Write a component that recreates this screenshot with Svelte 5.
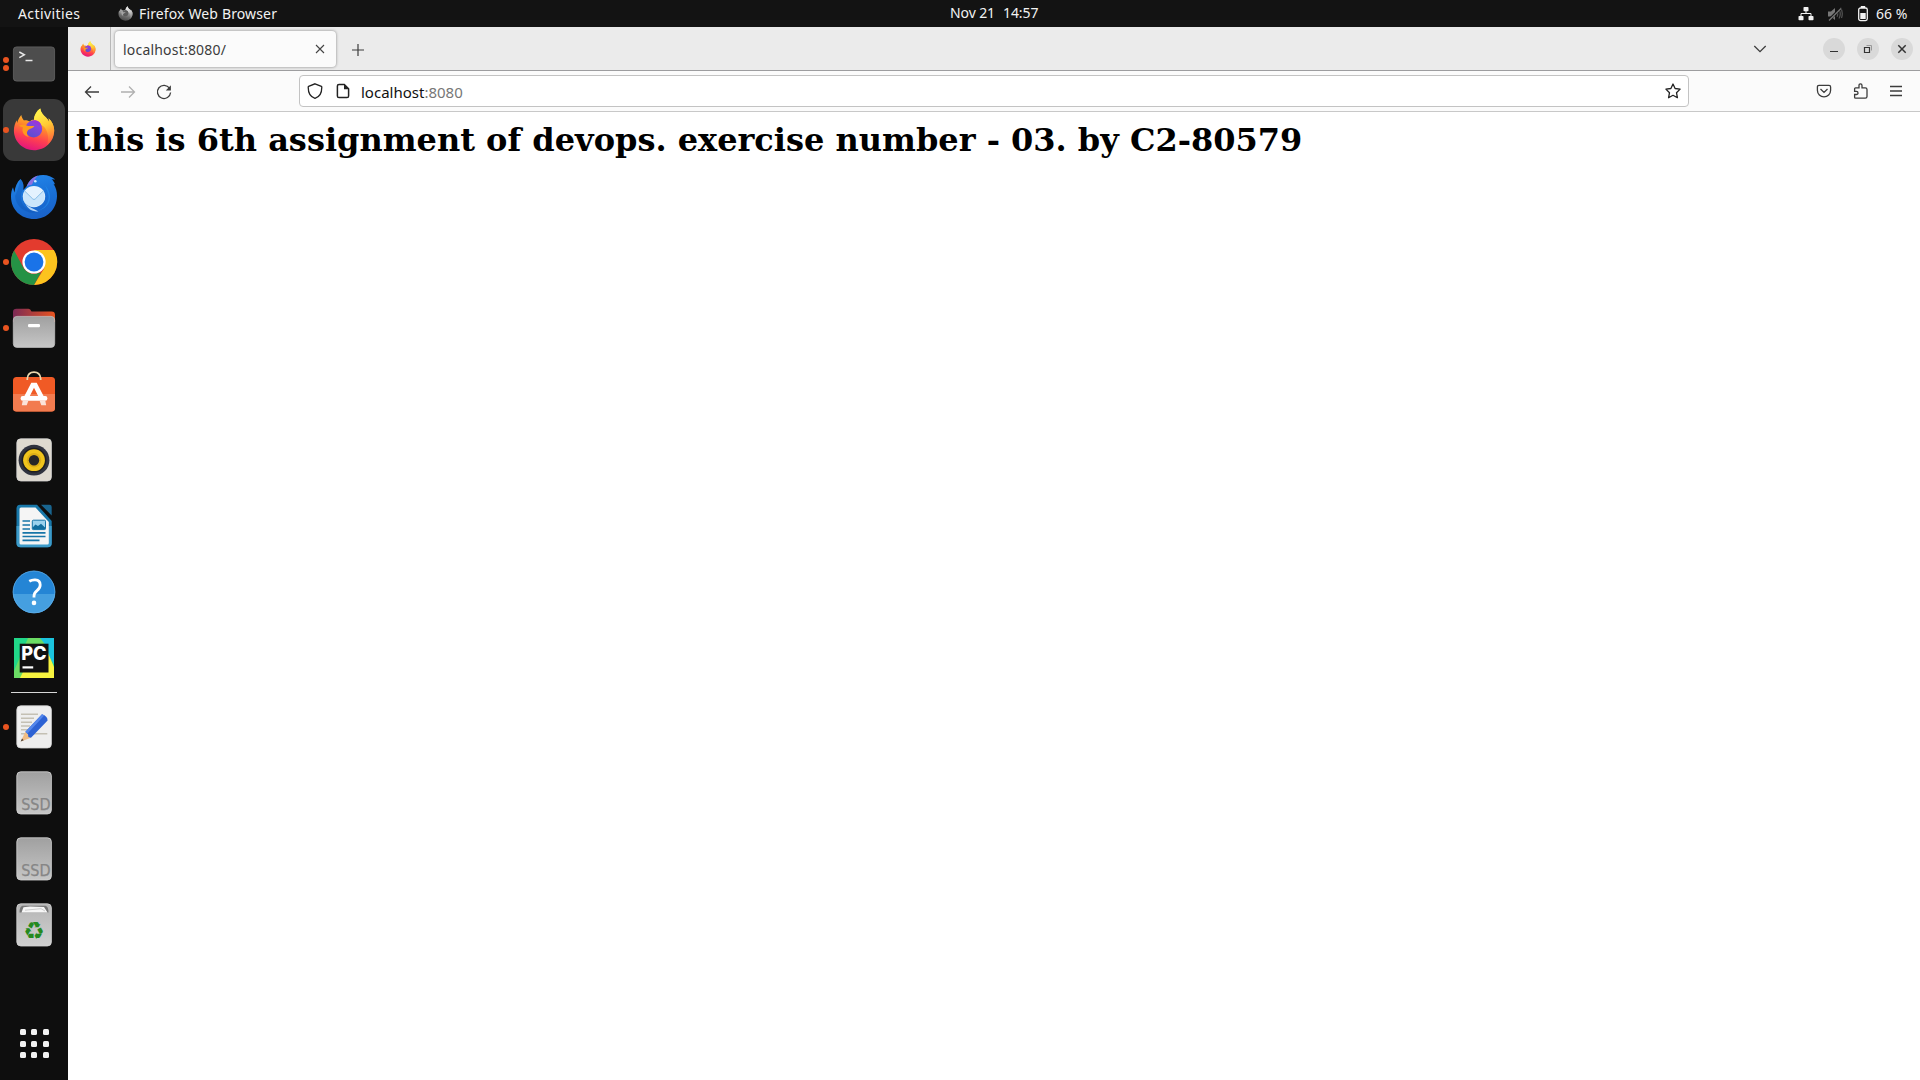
<script>
  const apps = [
    { name: 'terminal', dots: 2 },
    { name: 'firefox', dots: 1, active: true },
    { name: 'mail', dots: 0 },
    { name: 'chrome', dots: 1 },
    { name: 'files', dots: 1 },
    { name: 'software', dots: 0 },
    { name: 'music', dots: 0 },
    { name: 'writer', dots: 0 },
    { name: 'help', dots: 0 },
    { name: 'pycharm', dots: 0 }
  ];
  const extras = [
    { name: 'editor', dots: 1 },
    { name: 'ssd', dots: 0 },
    { name: 'ssd', dots: 0 },
    { name: 'trash', dots: 0 }
  ];
</script>

{#snippet firefoxArt()}
  <path fill="url(#fx-body)" d="M11.3 9 C11.8 11.5 12.5 13 14 14.4 C16 14.2 18 14.6 19.5 15.6 C21 14 22.4 13.7 24 13.7 C24 9.5 26.8 4.6 30.3 2.4 C30.5 6 33 8.5 36 11.5 C37.5 13 38.6 14.5 39.2 16.2 C39.3 14.8 39 13.5 38.5 12.3 C42 15.5 44.2 20 44.2 24.2 C44.2 35.5 35.2 44.2 24 44.2 C12.8 44.2 3.9 35.4 3.9 24.5 C3.9 20.2 5.2 16.8 6.8 14.2 L7.1 17 C8 13.8 9.4 11.3 11.3 9 Z" />
  <path fill="url(#fx-flame)" d="M30.3 2.4 C30.5 6 33 8.5 36 11.5 C37.5 13 38.6 14.5 39.2 16.2 C39.3 14.8 39 13.5 38.5 12.3 C42 15.5 44.2 20 44.2 24.2 C44.1 31 41 36 37 39 C40 32 37 21 31.5 19.3 C29 15.5 26.5 14.2 24 13.7 C24 9.5 26.8 4.6 30.3 2.4 Z" />
  <circle cx="23.7" cy="23.1" r="8.5" fill="url(#fx-core)" />
  <path fill="#9837d8" d="M21 15.2 C25 12.6 30.5 15 31.5 19.5 L29.5 18.2 L30 20.5 L26.5 18.5 Z" />
  <path fill="#ff9a1c" d="M9 19.5 C12 18.2 15 18.8 18 20 L24.3 20 C23.5 22.3 20.5 22.3 18.2 24 C16.2 26 16.5 29 19 31.2 C14 30 11.2 25.5 13 21.5 C11.6 20.9 10.2 20.5 9 19.5 Z" />
{/snippet}

{#snippet plate(fill)}
  <rect x="6.8" y="2.8" width="34.6" height="42.2" rx="4" {fill} stroke="#d4d4d4" stroke-width=".8" />
{/snippet}

{#snippet appIcon(name)}
  <svg class="app-icon" viewBox="0 0 48 48">
    {#if name === 'terminal'}
      <rect x="3.4" y="6.9" width="41.2" height="34.2" rx="3.2" fill="#4d4d4d" stroke="#646464" stroke-width=".8" />
      <path d="M9.3 12 L14.3 14.8 L9.3 17.6" fill="none" stroke="#e8e8e8" stroke-width="1.5" />
      <path d="M15.5 20.5 H22.5" stroke="#e8e8e8" stroke-width="1.5" />
    {:else if name === 'firefox'}
      {@render firefoxArt()}
    {:else if name === 'mail'}
      <path fill="url(#tb-body)" d="M10.5 7 C13.5 10 14 14 13.2 18 L16.5 14.5 C19 8 24 3.1 33 3 C38 3 42 5 45.3 7.4 L41.5 7.3 C43.3 8.7 44.5 10.5 45 12.5 L43.5 11.7 C46 15.5 47.1 19.5 47 24 C46.8 37.5 36.8 47 24.2 47 C10.8 47 1 37.5 1 24.5 C1 21.5 1.5 18 3 15.3 L4.4 20.5 C5.2 14.5 7 10 10.5 7 Z" />
      <path fill="#0b4fae" opacity=".35" d="M13 18 C8 25 11 39 28 40 C18 43 6 36 5 24 C7 20 9 14 10.5 7 C14 11 13.8 14 13 18 Z" />
      <path fill="#2590f0" opacity=".55" d="M35 13 C43 22 42 35 28 39 C37 35 40 28 38 21 Z" />
      <ellipse cx="24" cy="24.6" rx="11.2" ry="10.6" fill="#e4f2fe" />
      <path fill="#c3e1fa" d="M14.2 19 L23 27.5 Q24 28.3 25 27.5 L33.8 19 L34.8 27 C32.5 33 26 35.8 20 34.6 C16 33.5 13.5 30 13 26 Z" opacity=".8" />
      <path d="M14.3 18.7 L22.8 27 Q24 28 25.2 27 L33.6 18.7" fill="none" stroke="#86bde6" stroke-width="1" />
      <path fill="#b5d6f7" d="M17 33.2 C20 35.2 24 37 28.5 39.5 C22 39.5 18 37 15.5 32 Z" />
      <path fill="#8b6fe0" d="M16.5 14.8 C19 9 23 5 28 3.5 C25 6.5 23 10 22 12.8 C19.5 12.6 18 13.5 16.5 14.8 Z" />
      <circle cx="25.3" cy="9.2" r="1.3" fill="#cfe5ff" />
    {:else if name === 'chrome'}
      <circle cx="24" cy="24" r="23" fill="#e33b2e" />
      <path fill="#fcc31e" d="M24 12 H43.9 A23 23 0 0 1 24 47 L34.4 30 Z" />
      <path fill="#259245" d="M4.1 12.5 L13.6 30 Q17 35.5 24 36 L31 34.5 L24 47 A23 23 0 0 1 4.1 12.5 Z" />
      <circle cx="24" cy="24" r="11.6" fill="#fff" />
      <circle cx="24" cy="24" r="9.4" fill="#1a73e8" />
    {:else if name === 'files'}
      <path fill="url(#folder)" d="M3 18 V8 Q3 4.7 6.5 4.7 H18.5 Q20.5 4.7 21.5 7.6 H41.5 Q45 7.6 45 11 V18 Z" />
      <rect x="3.3" y="12.4" width="41.4" height="31" rx="3.6" fill="url(#steel)" stroke="#c5c5c5" stroke-width=".7" />
      <rect x="18" y="20" width="12" height="3.3" rx="1.2" fill="#fff" />
    {:else if name === 'software'}
      <rect x="3" y="7" width="42" height="34.6" rx="3.5" fill="#f05a25" />
      <path fill="#f27b4f" d="M3 24 H45 V38 Q45 41.6 41.5 41.6 H6.5 Q3 41.6 3 38 Z" />
      <path d="M17.3 10 V8.5 Q18 2.2 24 2.2 Q30 2.2 30.7 8.5 V10" fill="none" stroke="#ead7ae" stroke-width="1.7" />
      <path fill="#fff" d="M21.3 12.7 H26.7 L34.6 28 H29.2 L24 17.8 L18.8 28 H13.4 Z" />
      <rect x="10.6" y="26" width="26.8" height="4.7" rx="2.2" fill="#fff" />
      <path fill="#fbe3d9" d="M12.7 30.7 H18.4 L16.7 35.2 H11.8 Z M29.6 30.7 H35.3 L36.2 35.2 H31.3 Z" />
    {:else if name === 'music'}
      {@render plate('#dfdad0')}
      <circle cx="24" cy="24.2" r="15.4" fill="#30333f" />
      <circle cx="24" cy="24.2" r="12.4" fill="#201f20" />
      <circle cx="24" cy="24.2" r="10.9" fill="#f0c41c" />
      <circle cx="24" cy="24.2" r="7.2" fill="#dcae16" />
      <circle cx="24" cy="24.2" r="5.2" fill="#262626" />
    {:else if name === 'writer'}
      <path fill="#1878aa" d="M10 2.7 H27 L41.7 19 V41 Q41.7 45.3 37.5 45.3 H10.5 Q6.5 45.3 6.5 41 V6.5 Q6.5 2.7 10 2.7 Z" />
      <path fill="#3d9bc9" d="M6.5 24 H41.7 V41 Q41.7 45.3 37.5 45.3 H10.5 Q6.5 45.3 6.5 41 Z" />
      <path fill="#f5f5f5" d="M11 5.5 H25.5 L38.8 20 V41 Q38.8 42.5 37.3 42.5 H11 Q9.5 42.5 9.5 41 V7 Q9.5 5.5 11 5.5 Z" />
      <path fill="#19658f" d="M31 2.7 H39.5 Q41.7 2.7 41.7 5 V13.5 Z" />
      <path d="M12.5 19 H20 M12.5 23 H20 M12.5 27 H20 M12.5 30.8 H35.5 M12.5 34.5 H35.5 M12.5 38.3 H29.5" stroke="#1775a8" stroke-width="1.7" />
      <rect x="22.3" y="18.2" width="13.2" height="9.4" rx="1" fill="#9bd2ee" stroke="#1775a8" stroke-width="1" />
      <path fill="#116d9e" d="M22.5 27.3 V25.5 L25.5 22.5 L28 24 L31 21.8 L35.3 25.8 V27.3 Z" />
    {:else if name === 'help'}
      <circle cx="24" cy="23.9" r="21.2" fill="#2485d5" />
      <path fill="#459fe0" d="M2.9 26 H45.1 A21.2 21.2 0 0 1 2.9 26 Z" />
      <circle cx="24" cy="23.9" r="20.9" fill="none" stroke="#62aee5" stroke-width=".7" />
      <path d="M19.3 13.3 Q22 11.6 25.2 11.8 Q30.2 12.1 30.2 16.9 Q30.2 20 27 22.6 Q24 25.1 24 28.1 V29.6" fill="none" stroke="#fff" stroke-width="2.8" />
      <circle cx="24" cy="34.9" r="2.3" fill="#fff" />
    {:else if name === 'pycharm'}
      <rect x="4" y="4" width="40" height="40" fill="#21d789" />
      <path fill="#1bc4de" d="M30 4 H44 V30 L36 20 Z" />
      <path fill="#6bdc64" d="M18 4 H30 L38 14 L22 44 H4 V37 Z" />
      <path fill="#f7f33f" d="M36 14 L44 33 V44 H10 L14 36 H37 Z" />
      <rect x="9.7" y="9.7" width="28.8" height="28.8" fill="#111" />
      <text x="11.2" y="26.2" class="pc" textLength="25.4" lengthAdjust="spacingAndGlyphs">PC</text>
      <rect x="12.5" y="32.3" width="10.7" height="2.2" fill="#fff" />
    {:else if name === 'editor'}
      {@render plate('#eee')}
      <path d="M11 11.3 H28 M11 15.3 H24 M11 19.2 H22 M11 23 H20 M11 26.8 H18 M11 30.8 H37.3" stroke="#c4c0b4" stroke-width="1.5" />
      <path fill="#f1bd84" d="M10.7 38.5 L15.4 28.8 L21 34.8 Z" />
      <path fill="#4b4038" d="M10.7 38.5 L12 35.5 L13.7 37.2 Z" />
      <path fill="#2d62d4" d="M15.4 28.8 L32 11.3 Q37.5 13 37.6 17.4 L21 34.8 L18.4 34 L18 31.3 Z" />
      <path fill="#5487ec" d="M15.4 28.8 L32 11.3 L34.2 12.5 L17.5 30.5 Z" />
    {:else if name === 'ssd'}
      {@render plate('url(#steel)')}
      <text x="11.2" y="40.9" class="ssd" textLength="29.4" lengthAdjust="spacingAndGlyphs">SSD</text>
    {:else}
      {@render plate('url(#bin)')}
      <path fill="#777" d="M12.5 4.7 H35.5 Q38.5 5.5 38.5 11.5 H9.5 Q9.5 5.5 12.5 4.7 Z" />
      <path fill="#f6f6f6" d="M13.5 6.3 L20 5.5 L34 6 L37.5 11.5 H11.5 Z" />
      <path d="M15 9.2 L31 7.7 L35 10" fill="none" stroke="#bbb" stroke-width=".7" />
      <text x="24" y="37.7" class="recycle">♻</text>
    {/if}
  </svg>
{/snippet}

{#snippet dockItem(item)}
  <div class="item">
    <div class="dots">
      {#each Array(item.dots) as _}<i></i>{/each}
    </div>
    <div class="tile" class:active={item.active}>{@render appIcon(item.name)}</div>
  </div>
{/snippet}

<svg class="defs" width="0" height="0">
  <defs>
    <linearGradient id="fx-body" x1=".7" y1="0" x2=".4" y2="1">
      <stop offset=".1" stop-color="#ffd53a" /><stop offset=".42" stop-color="#ff9428" />
      <stop offset=".72" stop-color="#ff4050" /><stop offset="1" stop-color="#e3157d" />
    </linearGradient>
    <linearGradient id="fx-flame" x1=".3" y1="0" x2=".6" y2="1">
      <stop offset=".1" stop-color="#fff04a" /><stop offset=".5" stop-color="#ffc934" /><stop offset="1" stop-color="#ff6b3b" stop-opacity=".6" />
    </linearGradient>
    <linearGradient id="fx-core" x1=".8" y1="0" x2=".3" y2="1">
      <stop offset="0" stop-color="#9a3fe0" /><stop offset="1" stop-color="#5a4ed0" />
    </linearGradient>
    <linearGradient id="tb-body" x1=".3" y1="0" x2=".6" y2="1">
      <stop offset="0" stop-color="#2386ea" /><stop offset=".6" stop-color="#186dd4" /><stop offset="1" stop-color="#1a62c8" />
    </linearGradient>
    <linearGradient id="folder"><stop offset="0" stop-color="#7b2a55" /><stop offset="1" stop-color="#e95420" /></linearGradient>
    <linearGradient id="steel" x1="0" y1="0" x2="0" y2="1"><stop offset="0" stop-color="#a0a0a0" /><stop offset="1" stop-color="#c6c6c6" /></linearGradient>
    <linearGradient id="bin" x1="0" y1="0" x2="0" y2="1"><stop offset="0" stop-color="#b5b5b5" /><stop offset="1" stop-color="#d0d0d0" /></linearGradient>
  </defs>
</svg>

<div class="desktop">
  <header class="topbar">
    <div class="side">
      <span class="activities">Activities</span>
      <svg class="mini mono" viewBox="3 2 42 43">{@render firefoxArt()}</svg>
      <span class="app-name">Firefox Web Browser</span>
    </div>
    <div class="clock"><span class="date">Nov 21</span><span>14:57</span></div>
    <div class="side status">
      <svg width="16" height="16" viewBox="0 0 16 16" fill="#f2f2f2">
        <rect x="5.5" y="1" width="5" height="4.2" rx=".8" /><rect x=".5" y="10" width="5" height="4.2" rx=".8" /><rect x="10.5" y="10" width="5" height="4.2" rx=".8" />
        <path d="M8 5 V7.5 M3 10 V7.5 H13 V10" fill="none" stroke="#f2f2f2" />
      </svg>
      <svg class="mute" width="16" height="16" viewBox="0 0 16 16" fill="#777">
        <path d="M1 5.5 H4 L8 2 V14 L4 10.5 H1 Z" />
        <path d="M10 5.5 Q11.5 8 10 10.8 M12 3.5 Q14.5 8 12 12.5 M13.5 1.5 Q16.5 6 14.5 12" fill="none" stroke="#555" stroke-width="1.2" />
        <path d="M1.5 14.5 L14 2" stroke="#131313" stroke-width="2.6" /><path d="M2 14.5 L14 2.5" stroke="#777" stroke-width="1.2" />
      </svg>
      <svg class="battery" width="12" height="16" viewBox="0 0 12 16">
        <rect x="1.7" y="2" width="8.6" height="12.6" rx="1.8" fill="none" stroke="#f2f2f2" stroke-width="1.3" />
        <rect x="3.8" y="0" width="4.4" height="2" fill="#f2f2f2" /><rect x="3.3" y="7" width="5.4" height="6" fill="#f2f2f2" />
      </svg>
      <span class="percent">66 %</span>
    </div>
  </header>

  <div class="workspace">
    <aside class="dock">
      {#each apps as item}{@render dockItem(item)}{/each}
      <div class="separator"></div>
      {#each extras as item}{@render dockItem(item)}{/each}
      <div class="launcher">
        {#each Array(9) as _}<b></b>{/each}
      </div>
    </aside>

    <main class="window">
      <div class="tabs">
        <div class="pinned"><svg class="mini" viewBox="3 2 42 43">{@render firefoxArt()}</svg></div>
        <div class="tab">
          <span class="tab-title">localhost:8080/</span>
          <svg width="10" height="10" viewBox="0 0 10 10"><path d="M1 1 L9 9 M9 1 L1 9" stroke="#444" stroke-width="1.1" /></svg>
        </div>
        <svg class="plus" width="14" height="14" viewBox="0 0 14 14"><path d="M7 1 V13 M1 7 H13" stroke="#3c3c3c" stroke-width="1.2" /></svg>
        <svg class="chevron" width="14" height="10" viewBox="0 0 14 10"><path d="M1.3 2 L7 7.7 L12.7 2" fill="none" stroke="#3c3c3c" stroke-width="1.3" /></svg>
        <div class="controls">
          <span><svg viewBox="0 0 22 22"><path d="M7 13.5 H15" /></svg></span>
          <span><svg viewBox="0 0 22 22"><path d="M7.5 9.5 H12.5 V14.5 H7.5 Z" stroke-width="1.2" /><path d="M9.5 7.5 H14.5 V12.5" stroke="#999" /></svg></span>
          <span><svg viewBox="0 0 22 22"><path d="M7.3 7.3 L14.7 14.7 M14.7 7.3 L7.3 14.7" stroke-width="1.5" /></svg></span>
        </div>
      </div>

      <div class="nav">
        <svg viewBox="0 0 16 16"><path d="M15 8 H1.5 M7 2.5 L1.5 8 L7 13.5" /></svg>
        <svg class="disabled" viewBox="0 0 16 16"><path d="M1 8 H14.5 M9 2.5 L14.5 8 L9 13.5" /></svg>
        <svg viewBox="0 0 16 16"><path d="M13.5 4.2 A6.6 6.6 0 1 0 14.6 8.5" /><path d="M14.9 1.3 V6.4 H9.8 Z" fill="#3c3c3c" stroke="none" /></svg>
        <div class="url">
          <svg viewBox="0 0 16 16"><path d="M8 .8 L14.4 3.4 Q14.8 3.6 14.8 4.2 C14.8 9.5 12.4 14 8 15.3 C3.6 14 1.2 9.5 1.2 4.2 Q1.2 3.6 1.6 3.4 Z" /></svg>
          <svg class="doc" viewBox="0 0 16 16"><path d="M4 1.4 H9.3 L13.6 5.7 V13 Q13.6 14.6 12 14.6 H4 Q2.4 14.6 2.4 13 V3 Q2.4 1.4 4 1.4 Z" stroke-width="1.5" /><path d="M9 1.3 L13.8 6.2 H9 Z" fill="#222" stroke="none" /></svg>
          <span class="address">localhost<em>:8080</em></span>
          <svg class="star" viewBox="0 0 16 16"><path d="M8 1 L10.1 5.5 L15.1 6.1 L11.5 9.7 L12.4 14.7 L8 12.3 L3.6 14.7 L4.5 9.7 L.9 6.1 L5.9 5.5 Z" stroke-linejoin="round" /></svg>
        </div>
        <svg class="pocket" viewBox="0 0 16 16"><path d="M3 2.3 H13 Q14.6 2.3 14.6 4 V7.3 A6.6 6.6 0 0 1 1.4 7.3 V4 Q1.4 2.3 3 2.3 Z M4.5 6 L8 9.4 L11.5 6" /></svg>
        <svg class="ext" viewBox="0 0 16 16"><path d="M6 4.8 V2.5 Q6 .9 7.5 .9 Q9 .9 9 2.5 V4.8 H12.3 Q14 4.8 14 6.5 V13.5 Q14 15.2 12.3 15.2 H2.6 Q1.6 15.2 1.6 14.2 V11.5 H3.4 Q5 11.5 5 10 Q5 8.4 3.4 8.4 H1.6 V5.8 Q1.6 4.8 2.6 4.8 Z" /></svg>
        <svg class="menu" viewBox="0 0 16 16"><path d="M2 3.5 H14 M2 8 H14 M2 12.5 H14" /></svg>
      </div>

      <article><h1>this is 6th assignment of devops. exercise number - 03. by C2-80579</h1></article>
    </main>
  </div>
</div>

<style>
  :global(body) { margin: 0; overflow: hidden; }
  .defs { position: absolute; }
  .desktop { width: 1920px; height: 1080px; display: flex; flex-direction: column; font: 14px/18px 'Noto Sans', sans-serif; background: #fff; }
  svg { display: block; flex: none; }
  span { white-space: nowrap; }

  .topbar { height: 27px; flex: none; display: flex; align-items: center; background: #131313; color: #f2f2f2; }
  .side { flex: 1; display: flex; align-items: center; }
  .side:first-child { flex: 0 0 950px; }
  .activities { width: 100px; margin-left: 18px; letter-spacing: 0.4px; }
  .mini { width: 16px; height: 16px; }
  .mono { width: 15px; height: 15px; filter: grayscale(1); }
  .app-name { margin-left: 6px; letter-spacing: 0.14px; }
  .clock { display: flex; gap: 8px; padding-bottom: 2px; letter-spacing: -0.1px; }
  .status { justify-content: flex-end; padding-right: 13px; }
  .mute { margin-left: 13px; }
  .battery { margin-left: 14px; }
  .percent { margin-left: 7px; width: 31px; }

  .workspace { flex: 1; min-height: 0; display: flex; }
  .dock { width: 68px; flex: none; box-sizing: border-box; padding: 4px 0 22px; background: #0e0e0e; display: flex; flex-direction: column; }
  .item { height: 66px; flex: none; display: flex; align-items: center; }
  .dots { width: 3px; display: flex; flex-direction: column; gap: 2px; }
  .dots i { width: 6px; height: 6px; flex: none; border-radius: 50%; background: #e95420; transform: translateX(3px); z-index: 1; }
  .tile { width: 62px; height: 62px; border-radius: 11px; display: flex; align-items: center; justify-content: center; }
  .active { background: #393939; }
  .app-icon { width: 48px; height: 48px; }
  .separator { height: 1px; width: 46px; margin: 1px 11px; background: #d6d6d6; flex: none; }
  .launcher { margin: auto auto 0 19.5px; display: grid; grid-template-columns: repeat(3, 6px); gap: 5.5px; }
  .launcher b { width: 6px; height: 6px; border-radius: 1.5px; background: #f2f2f2; }
  .pc { font: 800 18.5px Inter, sans-serif; fill: #fff; }
  .ssd { font: 15.5px 'DejaVu Sans', sans-serif; fill: #868686; stroke: #868686; stroke-width: 0.25px; }
  .recycle { font: 24px 'DejaVu Sans', sans-serif; fill: #258a1f; text-anchor: middle; }

  .window { flex: 1; min-width: 0; display: flex; flex-direction: column; }
  .tabs { height: 44px; box-sizing: border-box; border-bottom: 1px solid #9d9d9f; background: #ebebeb; display: flex; align-items: center; color: #3c3c3c; }
  .pinned { width: 42px; height: 43px; border-right: 1px solid #b8b8b8; display: flex; align-items: center; justify-content: center; }
  .pinned .mini { margin-right: 2px; margin-top: 1px; }
  .tab { width: 221px; height: 36px; margin: 1px 0 0 4px; box-sizing: border-box; padding: 0 11px 0 8px; border-radius: 4px; background: #fbfbfb; box-shadow: 0 0 3px rgba(0, 0, 0, .45); display: flex; align-items: center; justify-content: space-between; }
  .tab-title { letter-spacing: 0.2px; padding-top: 1px; }
  .plus { margin: 2px 0 0 15px; }
  .chevron { margin-left: auto; margin-right: 56px; }
  .controls { display: flex; gap: 12px; margin-right: 7px; }
  .controls span { width: 22px; height: 22px; border-radius: 50%; background: #d9d9d9; }
  .controls svg { fill: none; stroke: #333; }

  .nav { height: 41px; box-sizing: border-box; border-bottom: 1px solid #c8c8c8; background: #fbfbfb; display: flex; align-items: center; padding-left: 16px; }
  .nav svg { width: 16px; height: 16px; margin: 1px 20px 0 0; fill: none; stroke: #3c3c3c; stroke-width: 1.3; }
  .nav .disabled { stroke: #b0b0b0; }
  .url { width: 1390px; height: 32px; box-sizing: border-box; margin-left: 107px; border: 1px solid #c3c3c3; border-radius: 4px; background: #fff; display: flex; align-items: center; padding-left: 7px; color: #111; }
  .nav .url svg { margin: 0 12px 0 0; stroke: #222; }
  .nav .url .doc { margin-right: 10px; }
  .nav .url .star { margin: 0 7px 0 auto; }
  .address { font-size: 15px; padding-top: 1px; }
  .address em { font-style: normal; color: #777; }
  .nav .pocket { margin: 0 21px 0 127px; }
  .nav .ext { margin-top: 0; }
  .nav .menu { margin: 0 0 0 -1px; }

  article { flex: 1; padding: 9px 8px 8px; background: #fff; }
  h1 { margin: 0; font: bold 32px/normal 'DejaVu Serif', serif; color: #000; white-space: nowrap; }
</style>
